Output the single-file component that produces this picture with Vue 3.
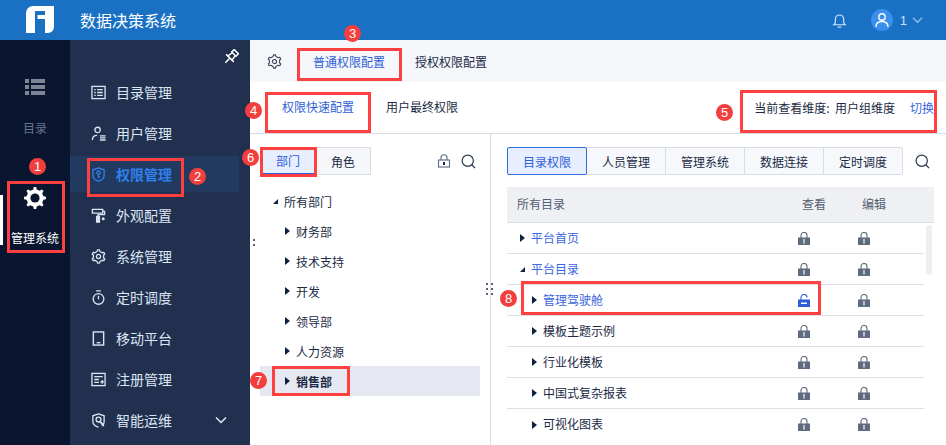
<script setup>
function gear(cx, cy, outer, inner, teeth) {
  const pts = []
  const step = (Math.PI * 2) / teeth
  for (let i = 0; i < teeth; i++) {
    const a = i * step - Math.PI / 2
    const w = step * 0.2
    const p = [
      [a - w * 1.3, inner],
      [a - w * 0.7, outer],
      [a + w * 0.7, outer],
      [a + w * 1.3, inner]
    ]
    p.forEach(([ang, r]) => pts.push((cx + r * Math.cos(ang)).toFixed(2) + ' ' + (cy + r * Math.sin(ang)).toFixed(2)))
  }
  return 'M' + pts.join('L') + 'Z'
}
const railGear = gear(11, 11, 11, 8.6, 8)
const lineGear = gear(8, 8, 7.2, 5.6, 6)

const menu = [
  { icon: 'dir', label: '目录管理' },
  { icon: 'user', label: '用户管理' },
  { icon: 'shield', label: '权限管理', active: true },
  { icon: 'paint', label: '外观配置' },
  { icon: 'gear', label: '系统管理' },
  { icon: 'timer', label: '定时调度' },
  { icon: 'mobile', label: '移动平台' },
  { icon: 'register', label: '注册管理' },
  { icon: 'ops', label: '智能运维', more: true }
]
const tree = ['财务部', '技术支持', '开发', '领导部', '人力资源', '销售部']
const tools = ['目录权限', '人员管理', '管理系统', '数据连接', '定时调度']
const rows = [
  { name: '平台首页', link: true },
  { name: '平台目录', link: true, open: true },
  { name: '管理驾驶舱', link: true, child: true, unlocked: true },
  { name: '模板主题示例', child: true },
  { name: '行业化模板', child: true },
  { name: '中国式复杂报表', child: true },
  { name: '可视化图表', child: true }
]
const marks = [1, 2, 3, 4, 5, 6, 7, 8]
</script>

<template>
  <div class="app">
    <header class="topbar">
      <svg class="logo" viewBox="0 0 28 28" width="28" height="28">
        <path fill-rule="evenodd" fill="#fff" d="M7 0H28V21a6 6 0 0 1-6 6H19V13H11.500V9H19V5H9V27H0V7a7 7 0 0 1 7-7Z" />
      </svg>
      <span class="title">数据决策系统</span>
      <svg class="bell" viewBox="0 0 16 16" width="15" height="15" fill="none" stroke="#d6e9fb" stroke-width="1.2">
        <path d="M2 12.500h12c-1.200-1-1.600-2-1.600-3.500V6.500a4.400 4.400 0 0 0-8.800 0V9c0 1.500-.4 2.500-1.600 3.500Z" />
        <path d="M6 15h4" />
      </svg>
      <span class="avatar">
        <svg viewBox="0 0 16 16" width="16" height="16" fill="none" stroke="#fff" stroke-width="1.400">
          <circle cx="8" cy="5" r="3.200" />
          <path d="M2 15c0-3.500 2.500-5.500 6-5.500s6 2 6 5.500" />
        </svg>
      </span>
      <span class="uname">1</span>
      <svg class="chev" viewBox="0 0 12 8" width="11" height="8" fill="none" stroke="#8fc0f0" stroke-width="1.300">
        <path d="M1 1.500l5 5 5-5" />
      </svg>
    </header>

    <div class="body">
      <nav class="rail">
        <div class="rail-item">
          <svg viewBox="0 0 20 16" width="20" height="16" fill="#7c8496">
            <rect x="0" y="0" width="4" height="4" />
            <rect x="6" y="0" width="14" height="4" />
            <rect x="0" y="6" width="4" height="4" />
            <rect x="6" y="6" width="14" height="4" />
            <rect x="0" y="12" width="4" height="4" />
            <rect x="6" y="12" width="14" height="4" />
          </svg>
          <span class="rail-label">目录</span>
        </div>
        <div class="rail-item rail-active">
          <svg viewBox="0 0 22 22" width="22" height="22">
            <path :d="railGear" fill="#fff" />
            <circle cx="11" cy="11" r="4.600" fill="#0a1530" />
          </svg>
          <span class="rail-label">管理系统</span>
        </div>
      </nav>

      <aside class="side">
        <svg class="pin" viewBox="0 0 16 16" width="16" height="16" fill="none" stroke="#fff" stroke-width="1.500">
          <g transform="rotate(45 8 8)">
            <rect x="5" y="0.500" width="6" height="3.500" />
            <path d="M6 4L5 9.500h6L10 4" />
            <path d="M2.500 9.500h11M8 9.500V16" />
          </g>
        </svg>
        <div v-for="m in menu" :key="m.label" class="menu-item" :class="{ on: m.active }">
          <svg class="mi" viewBox="0 0 16 16" width="15" height="15" fill="none" stroke="currentColor" stroke-width="1.400">
            <template v-if="m.icon === 'dir'">
              <rect x="1" y="1.500" width="14" height="13" />
              <path d="M3.500 5h1.500M6.500 5h6M3.500 8h1.500M6.500 8h6M3.500 11h1.500M6.500 11h6" />
            </template>
            <template v-else-if="m.icon === 'user'">
              <circle cx="7" cy="4.200" r="2.900" />
              <path d="M1.500 15c0-3 1.800-5 5-5" />
              <path d="M9.500 10.500h6M9.500 12.700h6M9.500 14.900h6" />
            </template>
            <template v-else-if="m.icon === 'shield'">
              <path d="M8 1l6 2v6c0 3-2.500 5-6 6-3.500-1-6-3-6-6V3Z" />
              <circle cx="8" cy="6" r="1.800" />
              <path d="M8 8v4M8 10.500h1.500" />
            </template>
            <template v-else-if="m.icon === 'paint'">
              <path d="M1.500 1.500h11v4h-11Z" />
              <path d="M12.500 3.500h2v3.500h-7v2" />
              <path d="M6 9h3v6H6Z" fill="currentColor" />
              <circle cx="13" cy="11.500" r="1.600" fill="currentColor" stroke="none" />
            </template>
            <template v-else-if="m.icon === 'gear'">
              <path :d="lineGear" stroke-linejoin="round" />
              <circle cx="8" cy="8" r="2.200" />
            </template>
            <template v-else-if="m.icon === 'timer'">
              <circle cx="8" cy="9.500" r="5.700" />
              <path d="M5.500 1h5M8 6v3.800" />
            </template>
            <template v-else-if="m.icon === 'mobile'">
              <rect x="2.500" y="1" width="11" height="14" stroke-width="1.500" />
              <path d="M6 12.500h4" />
            </template>
            <template v-else-if="m.icon === 'register'">
              <rect x="1" y="1.500" width="14" height="13" />
              <path d="M3.500 5h9M3.500 8h5M3.500 11h5M10 10.500h4M12 8.500v4" />
            </template>
            <template v-else>
              <path d="M8 1l6 2v6c0 1.500-.5 3-1.500 4M8 15c-3.500-1-6-3-6-6V3l6-2" />
              <circle cx="8" cy="7" r="2.600" />
              <path d="M9.800 9l3.700 5" stroke-width="2" />
            </template>
          </svg>
          <span>{{ m.label }}</span>
          <svg v-if="m.more" class="more" viewBox="0 0 12 8" width="12" height="8" fill="none" stroke="#e4ebf5" stroke-width="1.500">
            <path d="M1 1.500l5 5 5-5" />
          </svg>
        </div>
      </aside>

      <main class="main">
        <div class="tabs">
          <svg class="tabs-gear" viewBox="0 0 16 16" width="15" height="15" fill="none" stroke="#3c4658" stroke-width="1.200">
            <path :d="lineGear" stroke-linejoin="round" />
            <circle cx="8" cy="8" r="2.200" />
          </svg>
          <span class="tab tab-on">普通权限配置</span>
          <span class="tab">授权权限配置</span>
        </div>
        <div class="subbar">
          <span class="sub sub-on">权限快速配置</span>
          <span class="sub">用户最终权限</span>
          <span class="dim">当前查看维度:&nbsp;&nbsp;用户组维度</span>
          <span class="switch">切换</span>
        </div>

        <div class="panels">
          <section class="left">
            <div class="left-tools">
              <div class="toggle">
                <span class="tg tg-on">部门</span>
                <span class="tg">角色</span>
              </div>
              <svg class="lk" viewBox="0 0 14 14" width="14" height="14" fill="none" stroke="#5d6a80" stroke-width="1.100">
                <path d="M4 6V3.800a3 3 0 0 1 6 0V6" />
                <rect x="1.500" y="6" width="11" height="7" />
                <rect x="6" y="8" width="2" height="3" fill="#1a2a44" stroke="none" />
              </svg>
              <svg class="search" viewBox="0 0 16 16" width="15" height="15" fill="none" stroke="#2a3850" stroke-width="1.300">
                <circle cx="7.200" cy="7.200" r="6" />
                <path d="M11.500 11.500l3.500 3.500" />
              </svg>
            </div>
            <div class="tree">
              <div class="node root"><i class="arr-open"></i>所有部门</div>
              <div v-for="t in tree" :key="t" class="node" :class="{ sel: t === '销售部' }"><i class="arr"></i>{{ t }}</div>
            </div>
            <span class="grip grip-l"></span>
          </section>

          <section class="right">
            <span class="grip grip-r"></span>
            <span class="grip grip-r2"></span>
            <div class="right-tools">
              <div class="seg">
                <span v-for="(t, i) in tools" :key="t" class="seg-btn" :class="{ 'seg-on': i === 0 }">{{ t }}</span>
              </div>
              <svg class="search" viewBox="0 0 16 16" width="15" height="15" fill="none" stroke="#2a3850" stroke-width="1.300">
                <circle cx="7.200" cy="7.200" r="6" />
                <path d="M11.500 11.500l3.500 3.500" />
              </svg>
            </div>
            <div class="thead">
              <span class="th-name">所有目录</span>
              <span class="th">查看</span>
              <span class="th">编辑</span>
            </div>
            <div class="tbody">
              <div class="scroll"></div>
              <div v-for="r in rows" :key="r.name" class="row" :class="{ link: r.link, child: r.child }">
                <i :class="r.open ? 'arr-open' : 'arr'"></i>
                <span class="row-name">{{ r.name }}</span>
                <span class="cell">
                  <svg viewBox="0 0 12 13" width="12" height="13">
                    <path :d="r.unlocked ? 'M3 6V3.500a3 3 0 0 1 6 0' : 'M3 6V3.500a3 3 0 0 1 6 0V6'" fill="none" :stroke="r.unlocked ? '#2f5fd6' : '#5f6b7f'" stroke-width="1.100" />
                    <rect y="5.500" width="12" height="7.500" :fill="r.unlocked ? '#2f5fd6' : '#5f6b7f'" />
                    <rect v-if="r.unlocked" x="3" y="8.500" width="6" height="1.500" fill="#fff" />
                    <rect v-else x="5" y="7" width="2" height="4.500" fill="#b9c0cc" />
                  </svg>
                </span>
                <span class="cell">
                  <svg viewBox="0 0 12 13" width="12" height="13">
                    <path d="M3 6V3.500a3 3 0 0 1 6 0V6" fill="none" stroke="#5f6b7f" stroke-width="1.100" />
                    <rect y="5.500" width="12" height="7.500" fill="#5f6b7f" />
                    <rect x="5" y="7" width="2" height="4.500" fill="#b9c0cc" />
                  </svg>
                </span>
              </div>
            </div>
          </section>
        </div>
      </main>
    </div>

    <span v-for="n in marks" :key="'box' + n" class="mark-box" :class="'box-' + n"></span>
    <span v-for="n in marks" :key="'dot' + n" class="mark-dot" :class="'dot-' + n">{{ n }}</span>
  </div>
</template>

<style scoped>
.app {
  position: relative;
  width: 946px;
  height: 445px;
  overflow: hidden;
  display: flex;
  flex-direction: column;
  background: #fff;
  font-family: "Noto Sans CJK SC", "Liberation Sans", sans-serif;
  font-size: 12px;
  color: #1a2a44;
}

.topbar {
  flex: 0 0 40px;
  display: flex;
  align-items: center;
  background: #1a71c4;
  color: #fff;
}
.logo { margin-left: 26px; margin-top: -1px; }
.title { margin-left: 26px; font-size: 16px; }
.bell { margin-left: auto; }
.avatar {
  margin-left: 24px;
  width: 22px;
  height: 22px;
  border-radius: 50%;
  background: #3a8fec;
  display: flex;
  align-items: center;
  justify-content: center;
}
.uname { margin-left: 7px; font-size: 13px; color: #c9e1f8; font-family: "Liberation Sans", sans-serif; }
.chev { margin-left: 5px; margin-right: 23px; }

.body { flex: 1; display: flex; min-height: 0; }

.rail {
  flex: 0 0 70px;
  background: #0a1530;
  display: flex;
  flex-direction: column;
  align-items: center;
  padding-top: 39px;
  gap: 51px;
}
.rail-item {
  position: relative;
  width: 100%;
  display: flex;
  flex-direction: column;
  align-items: center;
  gap: 25px;
}
.rail-label { line-height: 16px; color: #66758c; }
.rail-active { gap: 21px; }
.rail-active .rail-label { color: #fff; }
.rail-active::before {
  content: "";
  position: absolute;
  left: 0;
  top: 8px;
  width: 3px;
  height: 50px;
  background: #fff;
}

.side {
  position: relative;
  flex: 0 0 180px;
  background: #22304f;
  padding: 34px 11px 0 0;
  display: flex;
  flex-direction: column;
  gap: 5px;
  box-sizing: border-box;
}
.pin { position: absolute; right: 11px; top: 9px; }
.menu-item {
  flex: 0 0 36px;
  display: flex;
  align-items: center;
  padding-left: 21px;
  color: #dbe5f3;
  font-size: 14px;
}
.mi { margin-right: 10px; flex: none; }
.more { margin-left: auto; margin-right: 12px; }
.on { background: #223a60; color: #2f80ed; font-weight: 700; }

.main { flex: 1; display: flex; flex-direction: column; min-width: 0; }

.tabs {
  flex: 0 0 42px;
  display: flex;
  align-items: center;
  background: #f5f7fb;
  box-sizing: border-box;
}
.tabs-gear { margin-left: 17px; }
.tab { color: #1a2a44; }
.tab-on { margin-left: 31px; color: #2f5fd6; }
.tab + .tab { margin-left: 30px; }

.subbar {
  flex: 0 0 52px;
  box-sizing: border-box;
  display: flex;
  align-items: center;
  border-bottom: 1px solid #d8dce6;
  padding-bottom: 3px;
}
.sub:first-child { margin-left: 32px; }
.sub + .sub { margin-left: 32px; }
.sub-on { color: #2f5fd6; }
.dim { margin-left: auto; color: #1a2a44; padding-top: 3px; }
.switch { margin-left: 15px; margin-right: 12px; color: #3a66e0; padding-top: 3px; }

.panels { flex: 1; display: flex; min-height: 0; }

.left {
  position: relative;
  flex: 0 0 241px;
  box-sizing: border-box;
  border-right: 1px solid #d8dce6;
  padding: 13px 10px 0;
}
.left-tools { display: flex; align-items: center; height: 28px; }
.toggle { display: flex; height: 28px; }
.tg {
  width: 55px;
  box-sizing: border-box;
  display: flex;
  align-items: center;
  justify-content: center;
  background: #f5f7fb;
  border: 1px solid #d8dce6;
  border-left: 0;
}
.tg-on { background: #e6eeff; color: #2f5fd6; border: 1px solid #d8dce6; border-bottom: 2px solid #2f5fd6; width: 56px; }
.lk { margin-left: auto; margin-right: 10px; }
.left-tools .search { margin-right: 4px; }
.tree { margin-top: 11px; }
.node {
  height: 30px;
  display: flex;
  align-items: center;
  padding-left: 25px;
}
.node .arr { margin-right: 6px; }
.root { padding-left: 13px; }
.root .arr-open { margin-right: 6px; }
.sel { background: #e5e8f0; font-weight: 700; }

.arr {
  flex: none;
  width: 0;
  height: 0;
  border-left: 5px solid #10213f;
  border-top: 4px solid transparent;
  border-bottom: 4px solid transparent;
}
.arr-open {
  flex: none;
  width: 0;
  height: 0;
  border-bottom: 5px solid #10213f;
  border-left: 5px solid transparent;
}

.grip {
  position: absolute;
  width: 1.500px;
  height: 12px;
  background: repeating-linear-gradient(to bottom, #5a6474 0 2px, transparent 2px 5px);
}
.grip-l { left: 3px; top: 105px; height: 10px; }
.grip-r { left: -5px; top: 149px; }
.grip-r2 { left: 0; top: 149px; }

.right {
  position: relative;
  flex: 1;
  min-width: 0;
  padding: 13px 12px 0 16px;
}
.right-tools { display: flex; align-items: center; height: 28px; }
.seg {
  display: flex;
  height: 28px;
  box-sizing: border-box;
  border: 1px solid #d8dce6;
  border-radius: 2px;
  background: #f6f8fc;
}
.seg-btn {
  width: 79px;
  display: flex;
  align-items: center;
  justify-content: center;
  border-right: 1px solid #d8dce6;
  box-sizing: border-box;
}
.seg-btn:last-child { border-right: 0; width: 78px; }
.seg-on {
  width: 80px;
  margin: -1px 0 -1px -1px;
  background: #e6eeff;
  color: #2f5fd6;
  border: 1px solid #2f6fe0;
  border-radius: 2px;
}
.right-tools .search { margin-left: 12px; }

.thead {
  margin-top: 12px;
  height: 36px;
  box-sizing: border-box;
  display: flex;
  align-items: center;
  background: #eef0f4;
  border-bottom: 1px solid #d8dce6;
  padding: 0 12px 2px 10px;
  color: #525e72;
}
.th-name { flex: 1; }
.th { width: 60px; }

.tbody { position: relative; }
.scroll {
  position: absolute;
  left: 419px;
  top: 2px;
  width: 6px;
  height: 50px;
  border-radius: 3px;
  background: #eceef3;
}
.row {
  width: 417px;
  height: 31px;
  box-sizing: border-box;
  border-bottom: 1px solid #dcdfe6;
  display: flex;
  align-items: center;
  padding: 0 6px 0 13px;
}
.row:last-child { border-bottom: 0; }
.row .arr, .row .arr-open { margin-right: 6px; }
.child { padding-left: 25px; }
.link .row-name { color: #3a66e0; }
.row-name { flex: 1; margin-top: -2px; }
.cell { width: 60px; display: flex; align-items: center; }

.mark-box {
  position: absolute;
  box-sizing: border-box;
  border: 3px solid #ff4040;
  pointer-events: none;
}
.box-1 { left: 7px; top: 181px; width: 58px; height: 72px; }
.box-2 { left: 87px; top: 158px; width: 97px; height: 39px; }
.box-3 { left: 297px; top: 48px; width: 105px; height: 33px; }
.box-4 { left: 265px; top: 92px; width: 106px; height: 41px; }
.box-5 { left: 740px; top: 90px; width: 197px; height: 43px; }
.box-6 { left: 260px; top: 147px; width: 57px; height: 30px; }
.box-7 { left: 272px; top: 366px; width: 78px; height: 30px; }
.box-8 { left: 521px; top: 281px; width: 300px; height: 34px; }

.mark-dot {
  position: absolute;
  width: 17px;
  height: 17px;
  border-radius: 50%;
  background: #f33e3e;
  color: #fff;
  font-size: 13px;
  line-height: 17px;
  text-align: center;
  font-family: "Liberation Sans", sans-serif;
}
.dot-1 { left: 29px; top: 158px; }
.dot-2 { left: 189px; top: 168px; }
.dot-3 { left: 344px; top: 25px; }
.dot-4 { left: 245px; top: 102px; }
.dot-5 { left: 716px; top: 104px; }
.dot-6 { left: 242px; top: 149px; }
.dot-7 { left: 250px; top: 372px; }
.dot-8 { left: 500px; top: 290px; }
</style>
